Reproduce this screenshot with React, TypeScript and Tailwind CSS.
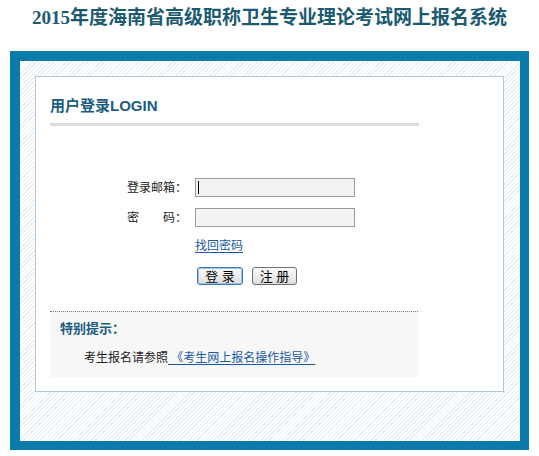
import React from 'react';

const cjk = "font-['Liberation_Sans','Noto_Sans_CJK_SC',sans-serif]";

const App = () => {
  return (
    <div className={`w-[539px] h-[456px] bg-white text-[12px] text-[#222] ${cjk}`}>
      {/* Page title */}
      <h1 className="h-[51px] pt-[8px] text-center text-[19px] leading-[20px] font-bold text-[#1b5a70] font-['Liberation_Serif','Noto_Sans_CJK_SC',serif]">
        2015年度海南省高级职称卫生专业理论考试网上报名系统
      </h1>

      {/* Blue frame */}
      <div className="mx-[10px] border-[10px] border-r-[9px] border-b-[9px] border-[#0b7bab]">
        <div className="pt-[15px] pl-[15px] pr-[16px] pb-[49px] bg-[repeating-linear-gradient(135deg,#e6eef5_0px,#e6eef5_1px,#ffffff_1px,#ffffff_3px)]">
          <div className="h-[316px] border border-[#b6c6d2] bg-white px-[14px]">
            {/* Heading */}
            <h2 className="pt-[19px] text-[15px] leading-[20px] font-bold text-[#1a5d80]">用户登录LOGIN</h2>
            <div className="mt-[7px] w-[369px] h-[3px] bg-[#dcdcdc]" />

            {/* Login form */}
            <div className="mt-[52px] flex flex-col">
              <div className="flex items-center h-[19px]">
                <label className="w-[137px] text-right">登录邮箱：</label>
                <div className="relative ml-[8px]">
                  <input type="text" className="block w-[160px] h-[19px] border border-[#9c9c9c] bg-[#f3f3f3] outline-none" />
                  <span className="absolute left-[3px] top-[3px] w-px h-[13px] bg-black" />
                </div>
              </div>
              <div className="flex items-center h-[19px] mt-[11px]">
                <label className="w-[137px] text-right">密　　码：</label>
                <input type="password" className="ml-[8px] block w-[160px] h-[19px] border border-[#9c9c9c] bg-[#f3f3f3] outline-none" />
              </div>
              <a href="#" className="mt-[11px] ml-[145px] leading-[16px] text-[#1b5aa0] underline underline-offset-2 w-fit">找回密码</a>
              <div className="mt-[13px] ml-[147px] flex gap-[9px]">
                <button className="w-[46px] h-[18px] rounded-[3px] border border-[#3d7bad] bg-linear-to-b from-[#fbfbfb] to-[#dedede] text-[13px] leading-none text-black shadow-[inset_0_0_0_1px_#9cc3e0]">
                  登 录
                </button>
                <button className="w-[45px] h-[18px] rounded-[3px] border border-[#707070] bg-linear-to-b from-[#fbfbfb] to-[#dedede] text-[13px] leading-none text-black">
                  注 册
                </button>
              </div>
            </div>

            {/* Tips */}
            <div className="mt-[26px] w-[368px] h-[66px] border-t border-dotted border-[#777] bg-[#f7f7f7]">
              <p className="pt-[8px] pl-[10px] text-[13px] leading-[18px] font-bold text-[#1a5d80]">特别提示：</p>
              <p className="mt-[12px] pl-[34px] leading-[16px]">
                考生报名请参照
                <a href="#" className="text-[#1b5aa0] underline underline-offset-2"> 《考生网上报名操作指导》 </a>
              </p>
            </div>
          </div>
        </div>
      </div>
    </div>
  );
};

export default App;
